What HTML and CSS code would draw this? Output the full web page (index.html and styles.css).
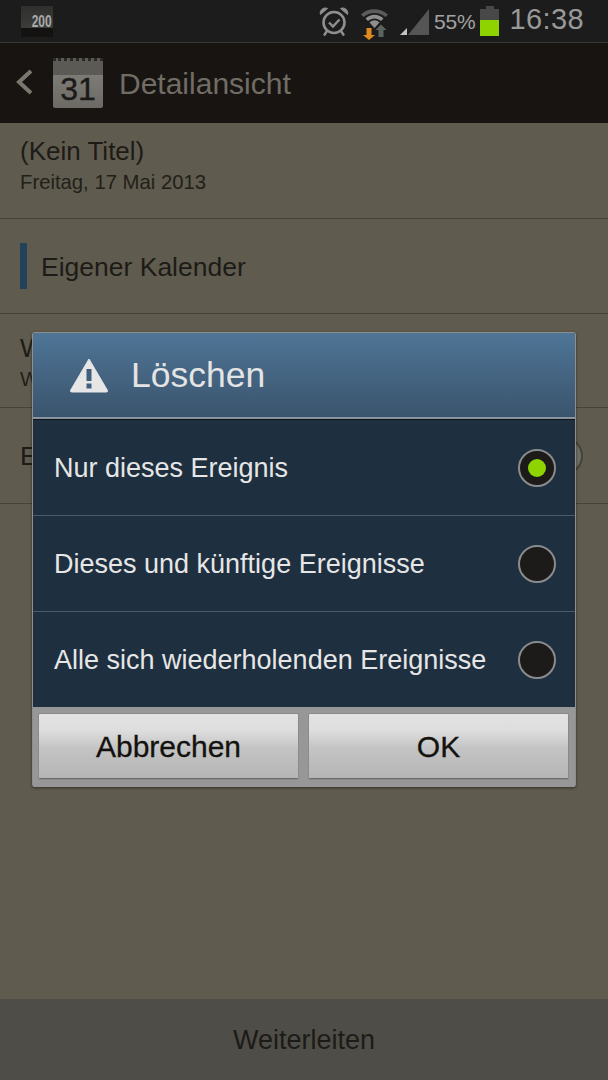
FILE: index.html
```html
<!DOCTYPE html>
<html lang="de">
<head>
  <meta charset="UTF-8" />
  <title>Detailansicht</title>
  <link rel="stylesheet" href="styles.css">
</head>
<body>
  <div class="phone">
    <div class="status-bar">
      <div class="status-left">
        <div class="note-icon"><span>200</span></div>
      </div>
      <div class="status-right">
        <svg class="alarm" width="30" height="32" viewBox="0 0 30 32" fill="none" stroke="#8f8f8f">
          <circle cx="15" cy="17.500" r="10.500" stroke-width="2.600"/>
          <path d="M10 17.500l4 4 6.500-7" stroke-width="2.400"/>
          <path d="M1.500 9.500c-1.500-4 3-8 7-6zM28.500 9.500c1.500-4-3-8-7-6z" fill="#8f8f8f" stroke-width="1"/>
          <path d="M8 26l-3 4.500M22 26l3 4.500" stroke-width="2.400"/>
        </svg>
        <svg class="wifi" width="30" height="32" viewBox="0 0 30 32">
          <path d="M1 10.500C8 3.500 20 3.500 28 10.500L25.500 13C19 7.500 10 7.500 3.500 13z" fill="#5c5c5c"/>
          <path d="M5.500 14.500C11 9.500 18 9.500 23.500 14.500L21 17C17 13.500 12 13.500 8 17z" fill="#8f8f8f"/>
          <path d="M9.500 18.500C13 15.500 16 15.500 19.500 18.500L14.500 24z" fill="#8f8f8f"/>
          <path d="M18.500 33V26H15.500L21 20.500 26.500 26H23.500V33z" fill="#5c6460"/>
          <path d="M6.500 24h5v7h3.500l-6 5-6-5h3.500z" fill="#e08a1e"/>
        </svg>
        <svg class="signal" width="30" height="28" viewBox="0 0 30 28">
          <path d="M29 1V27H8z" fill="#555"/>
          <path d="M7 20V27H0z" fill="#c4c4c4"/>
        </svg>
        <span class="battery-text">55%</span>
        <div class="battery">
          <div class="battery-cap"></div>
          <div class="battery-body"><div class="battery-fill"></div></div>
        </div>
        <span class="clock">16:38</span>
      </div>
    </div>

    <header class="action-bar">
      <svg class="back" width="18" height="26" viewBox="0 0 18 26" fill="none" stroke="#7c776e" stroke-width="4">
        <path d="M16 2L4 13l12 11"/>
      </svg>
      <div class="cal-icon">
        <div class="cal-top"></div>
        <div class="cal-day">31</div>
      </div>
      <h1 class="bar-title">Detailansicht</h1>
    </header>

    <main class="details">
      <section class="row row-title">
        <div class="event-title">(Kein Titel)</div>
        <div class="event-date">Freitag, 17 Mai 2013</div>
      </section>
      <section class="row row-calendar">
        <span class="cal-mark"></span>
        <span class="cal-name">Eigener Kalender</span>
      </section>
      <section class="row row-repeat">
        <div class="event-title">W</div>
        <div class="event-date">W</div>
      </section>
      <section class="row row-remind">
        <span class="cal-name">E</span>
        <span class="remind-knob"></span>
      </section>
    </main>

    <footer class="bottom-bar">Weiterleiten</footer>

    <div class="dialog">
      <div class="dialog-head">
        <svg class="warn" width="40" height="36" viewBox="0 0 40 36">
          <path d="M20 2L38.500 33.500Q39 35 37 35H3Q1 35 1.500 33.500z" fill="#e6e6e6" stroke="#e6e6e6" stroke-width="1" stroke-linejoin="round"/>
          <rect x="17.500" y="12" width="5" height="12" fill="#3f5f7c"/>
          <rect x="17.500" y="26.500" width="5" height="5" fill="#3f5f7c"/>
        </svg>
        <h2 class="dialog-title">Löschen</h2>
      </div>
      <ul class="options">
        <li class="option">
          <span class="option-label">Nur dieses Ereignis</span>
          <span class="radio radio-on"></span>
        </li>
        <li class="option">
          <span class="option-label">Dieses und künftige Ereignisse</span>
          <span class="radio"></span>
        </li>
        <li class="option">
          <span class="option-label">Alle sich wiederholenden Ereignisse</span>
          <span class="radio"></span>
        </li>
      </ul>
      <div class="dialog-buttons">
        <button class="btn">Abbrechen</button>
        <button class="btn">OK</button>
      </div>
    </div>
  </div>
</body>
</html>
```

FILE: styles.css
```css
* {
  box-sizing: border-box;
}

html, body {
  margin: 0;
  padding: 0;
}

body {
  width: 608px;
  height: 1080px;
  overflow: hidden;
  font-family: "Liberation Sans", Arial, sans-serif;
  background: #5f5b4e;
}

.phone {
  position: relative;
  width: 608px;
  height: 1080px;
  display: flex;
  flex-direction: column;
}

/* status bar */
.status-bar {
  height: 43px;
  flex-shrink: 0;
  background: #1c1c1c;
  border-bottom: 1px solid #3a3935;
  display: flex;
  justify-content: space-between;
  align-items: center;
  padding: 0 24px 0 21px;
}

.note-icon {
  width: 32px;
  height: 31px;
  background: linear-gradient(#2f302e 0, #3c3d3b 70%, #141211 71%);
  display: flex;
  justify-content: flex-end;
  padding: 8px 1px 0 0;
}

.note-icon span {
  font-size: 16px;
  line-height: 15px;
  font-weight: bold;
  color: #a9a9a9;
  transform: scaleX(0.75);
  transform-origin: right top;
}

.status-right {
  display: flex;
  align-items: center;
}

.alarm {
  margin: -1px 11px 0 0;
}

.wifi {
  margin: -2px 10px 0 0;
  overflow: visible;
}

.signal {
  margin: 1px 4px 0 0;
}

.battery-text {
  font-size: 21px;
  color: #a3a3a3;
  margin: 1px 5px 0 0;
  letter-spacing: -0.2px;
}

.battery {
  width: 19px;
  height: 30px;
  margin: 0 10px 0 0;
  display: flex;
  flex-direction: column;
  align-items: center;
}

.battery-cap {
  width: 8px;
  height: 3px;
  background: #484848;
}

.battery-body {
  width: 19px;
  flex: 1;
  background: #484848;
  display: flex;
  align-items: flex-end;
}

.battery-fill {
  width: 100%;
  height: 16px;
  background: #8fd400;
}

.clock {
  font-size: 29px;
  color: #999;
  line-height: 32px;
  margin-top: -5px;
  letter-spacing: 0.4px;
}

/* action bar */
.action-bar {
  height: 80px;
  flex-shrink: 0;
  background: #181412;
  display: flex;
  align-items: center;
  padding-left: 15px;
}

.back {
  margin-top: -2px;
}

.cal-icon {
  width: 50px;
  height: 50px;
  margin: 0 0 0 20px;
  border-radius: 2px;
  overflow: hidden;
  display: flex;
  flex-direction: column;
}

.cal-top {
  height: 17px;
  background: #5c5a55;
  border-top: 3px dotted #2a2825;
}

.cal-day {
  flex: 1;
  background: linear-gradient(#7d7b75, #6c6a65);
  color: #1c1a18;
  font-size: 32px;
  line-height: 29px;
  text-align: center;
  -webkit-text-stroke: 0.4px #1c1a18;
}

.bar-title {
  margin: 2px 0 0 16px;
  font-size: 30px;
  font-weight: normal;
  color: #716d65;
}

/* details behind the dialog */
.details {
  flex: 1;
  display: flex;
  flex-direction: column;
  color: #1d1b17;
}

.row {
  border-bottom: 1px solid #45423a;
  padding: 0 20px;
}

.row-title {
  height: 96px;
  padding-top: 13px;
}

.row-calendar {
  height: 95px;
  display: flex;
  align-items: center;
}

.row-repeat {
  height: 94px;
  padding-top: 19px;
}

.row-remind {
  height: 96px;
  display: flex;
  align-items: center;
  justify-content: space-between;
  padding-right: 25px;
}

.event-title {
  font-size: 26px;
  line-height: 30px;
}

.event-date {
  font-size: 20.3px;
  line-height: 32px;
  color: #221f1a;
}

.cal-mark {
  width: 7px;
  height: 46px;
  margin-right: 14px;
  background: #22425a;
}

.cal-name {
  font-size: 26.5px;
  margin-top: 2px;
}

.remind-knob {
  width: 38px;
  height: 38px;
  border-radius: 50%;
  background: #6e6c66;
  border: 2px solid #45423a;
}

.bottom-bar {
  height: 81px;
  flex-shrink: 0;
  background: #4e4d47;
  color: #1d1b17;
  font-size: 27px;
  text-align: center;
  line-height: 83px;
}

/* dialog */
.dialog {
  position: absolute;
  left: 32px;
  top: 332px;
  width: 544px;
  height: 455px;
  border-radius: 3px;
  overflow: hidden;
  background: #8f8f8f;
  box-shadow: 0 1px 3px rgba(40, 38, 30, 0.8);
  display: flex;
  flex-direction: column;
  padding: 1px 1px 0;
}

.dialog-head {
  height: 86px;
  flex-shrink: 0;
  background: linear-gradient(#4f7596, #3a546d);
  border-bottom: 2px solid #8a949c;
  display: flex;
  align-items: center;
  padding-left: 36px;
}

.dialog-title {
  margin: 0 0 0 22px;
  font-size: 35.500px;
  font-weight: normal;
  color: #e4e4e4;
}

.options {
  list-style: none;
  margin: 0;
  padding: 0;
  height: 288px;
  flex-shrink: 0;
  background: #1e2f3f;
  border-top: 1px solid #0c1216;
}

.option {
  height: 96px;
  display: flex;
  align-items: center;
  justify-content: space-between;
  padding: 0 19px 0 21px;
  border-bottom: 1px solid #4b5d6c;
  font-size: 27px;
  color: #e6e6e6;
}

.option:last-child {
  height: 95px;
  border-bottom: none;
}

.option-label {
  margin-top: 2px;
}

.radio {
  width: 38px;
  height: 38px;
  border-radius: 50%;
  background: #1c1b1a;
  border: 2px solid #8b8b8b;
  display: flex;
  align-items: center;
  justify-content: center;
}

.radio-on::before {
  content: "";
  width: 18px;
  height: 18px;
  border-radius: 50%;
  background: #8fd400;
}

.dialog-buttons {
  flex: 1;
  display: flex;
  gap: 11px;
  padding: 7px 7px 8px 6px;
  background: #979797;
}

.btn {
  flex: 1;
  height: 65px;
  padding: 2px 0 0;
  font-family: inherit;
  font-size: 30px;
  color: #14120f;
  -webkit-text-stroke: 0.3px #14120f;
  background: linear-gradient(#e2e2e2 0, #dedede 25%, #c2c3c2 55%, #b5b5b5 100%);
  border: none;
  border-bottom: 1px solid #6b6b6b;
  border-radius: 1px;
  box-shadow: 0 0 0 1px #8a8a8a;
}
```
